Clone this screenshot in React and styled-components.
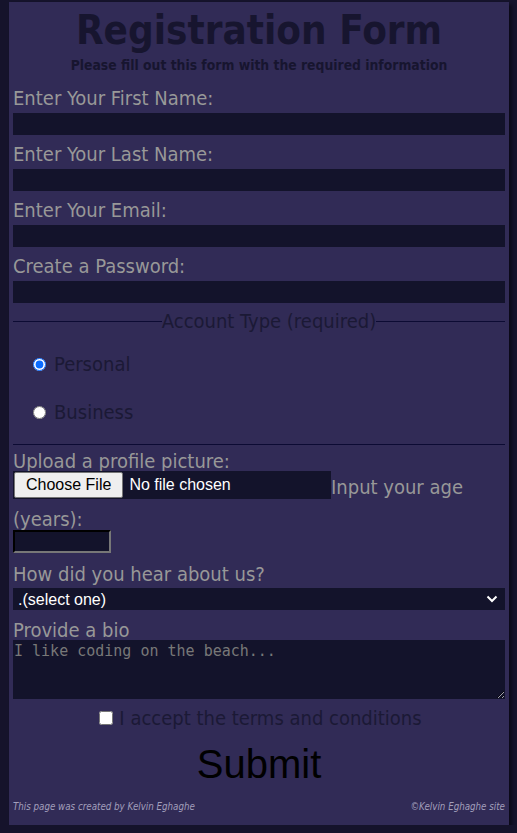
import React from "react";
import styled, { createGlobalStyle } from "styled-components";

const Global = createGlobalStyle`
  html, body { margin: 0; padding: 0; }
  body {
    background: #15132b;
    font-family: "DejaVu Sans Condensed", "DejaVu Sans", sans-serif;
  }
`;

const Card = styled.main`
  box-sizing: border-box;
  width: 500px;
  margin: 2px 0 0 9px;
  padding: 6px 4px 11px;
  background: #312b56;
  box-shadow: 3px 3px 3px #0b0a18;
`;

const Title = styled.h1`
  margin: 0;
  text-align: center;
  font-size: 40px;
  line-height: 44px;
  font-weight: bold;
  color: #17152f;
`;

const Subtitle = styled.p`
  margin: 4px 0 13px;
  text-align: center;
  font-size: 13.8px;
  line-height: 18px;
  font-weight: bold;
  color: #17152f;
`;

const Group = styled.div`
  margin-top: ${(p) => p.$mt ?? 0}px;
  margin-bottom: ${(p) => p.$mb ?? 8}px;
`;

const Label = styled.label`
  display: block;
  font-size: 20px;
  line-height: 22px;
  color: #989898;
  margin-bottom: ${(p) => p.$gap ?? 4}px;
`;

const TextInput = styled.input`
  display: block;
  box-sizing: border-box;
  width: 100%;
  height: 22px;
  border: none;
  background: #13132b;
  color: #fff;
  padding: 0 4px;
  outline: none;
`;

const Fieldset = styled.fieldset`
  margin: 0;
  padding: 9px 0 8px 20px;
  border: none;
  border-top: 1px solid #0c0b33;
  border-bottom: 1px solid #0c0b33;
`;

const Legend = styled.legend`
  margin: 0 auto;
  padding: 0;
  font-size: 20px;
  line-height: 20px;
  color: #1b1935;
`;

const RadioRow = styled.label`
  display: flex;
  align-items: center;
  gap: 8px;
  height: 48px;
  font-size: 20px;
  color: #1b1935;
  input {
    margin: 0;
    width: 13px;
    height: 13px;
    accent-color: #0a6cff;
  }
`;

const Flow = styled.div`
  margin-top: 6px;
  font-size: 20px;
  line-height: 32px;
  color: #989898;
`;

const UploadLabel = styled.label`
  display: block;
  font-size: 20px;
  line-height: 20px;
  color: #989898;
`;

const FileInput = styled.input`
  vertical-align: top;
  box-sizing: border-box;
  width: 318px;
  height: 28px;
  margin: 0;
  background: #13132b;
  color: #fff;
  font-family: "Liberation Sans", Arial, sans-serif;
  font-size: 16px;
  &::file-selector-button {
    font-family: "Liberation Sans", Arial, sans-serif;
    font-size: 16px;
    height: 26px;
    margin: 1px 6px 1px 1px;
    padding: 0 11px;
    background: #efefef;
    color: #000;
    border: 1px solid #767676;
    border-radius: 2px;
  }
`;

const AgeInput = styled.input`
  display: block;
  box-sizing: border-box;
  width: 98px;
  height: 23px;
  margin: -5px 0 0;
  background: #13132b;
  border-width: 2px;
  border-style: inset;
  border-color: #3c3c3c #777 #777 #3c3c3c;
  color: #fff;
`;

const SelectWrap = styled.div`
  position: relative;
  height: 22px;
`;

const Select = styled.select`
  display: block;
  box-sizing: border-box;
  width: 100%;
  height: 22px;
  appearance: none;
  border: none;
  background: #13132b;
  color: #fff;
  font-family: "Liberation Sans", Arial, sans-serif;
  font-size: 16px;
  padding: 0 0 0 5px;
  outline: none;
`;

const Chevron = styled.svg`
  position: absolute;
  right: 7px;
  top: 7px;
  pointer-events: none;
`;

const TextArea = styled.textarea`
  display: block;
  box-sizing: border-box;
  width: 100%;
  height: 59px;
  border: none;
  background: #13132b;
  color: #ddd;
  padding: 2px 1px;
  font-family: "DejaVu Sans Mono", monospace;
  font-size: 15px;
  line-height: 18px;
  outline: none;
  &::placeholder {
    color: #787878;
  }
`;

const Terms = styled.label`
  display: flex;
  justify-content: center;
  align-items: center;
  gap: 6px;
  margin-top: 7px;
  font-size: 20px;
  line-height: 24px;
  color: #1b1935;
  input {
    margin: 0 0 0 3px;
    width: 14px;
    height: 14px;
  }
`;

const SubmitButton = styled.button`
  display: block;
  margin: 11px auto 0;
  padding: 0;
  border: none;
  background: transparent;
  font-family: "Liberation Sans", Arial, sans-serif;
  font-size: 40px;
  line-height: 46px;
  color: #000;
`;

const Footer = styled.footer`
  display: flex;
  justify-content: space-between;
  margin-top: 13px;
  font-size: 9.7px;
  line-height: 14px;
  font-style: italic;
  color: #a29fbb;
`;

const groups = [
  ["first", "Enter Your First Name:", "text"],
  ["last", "Enter Your Last Name:", "text"],
  ["email", "Enter Your Email:", "email"],
  ["pw", "Create a Password:", "password"],
];

export default function App() {
  return (
    <>
      <Global />
      <Card>
        <Title>Registration Form</Title>
        <Subtitle>Please fill out this form with the required information</Subtitle>
        <form onSubmit={(e) => e.preventDefault()}>
          {groups.map(([id, text, type]) => (
            <Group key={id}>
              <Label htmlFor={id}>{text}</Label>
              <TextInput id={id} type={type} />
            </Group>
          ))}
          <Fieldset>
            <Legend>Account Type (required)</Legend>
            <RadioRow>
              <input type="radio" name="acct" defaultChecked /> Personal
            </RadioRow>
            <RadioRow>
              <input type="radio" name="acct" /> Business
            </RadioRow>
          </Fieldset>
          <Flow>
            <UploadLabel htmlFor="pic">Upload a profile picture:</UploadLabel>
            <FileInput id="pic" type="file" />
            <label htmlFor="age">Input your age (years):</label>
            <AgeInput id="age" type="number" />
          </Flow>
          <Group $mt={10} $mb={9}>
            <Label htmlFor="hear" $gap={3}>How did you hear about us?</Label>
            <SelectWrap>
              <Select id="hear" defaultValue="">
                <option value="">.(select one)</option>
                <option>freeCodeCamp News</option>
                <option>YouTube</option>
              </Select>
              <Chevron width="12" height="8" viewBox="0 0 12 8">
                <path d="M1.5 1.5 L6 6 L10.5 1.5" fill="none" stroke="#fff" strokeWidth="2" />
              </Chevron>
            </SelectWrap>
          </Group>
          <Label htmlFor="bio" $gap={-1}>Provide a bio</Label>
          <TextArea id="bio" placeholder="I like coding on the beach..." />
          <Terms>
            <input type="checkbox" /> I accept the terms and conditions
          </Terms>
          <SubmitButton type="submit">Submit</SubmitButton>
        </form>
        <Footer>
          <span>This page was created by Kelvin Eghaghe</span>
          <span>©Kelvin Eghaghe site</span>
        </Footer>
      </Card>
    </>
  );
}
